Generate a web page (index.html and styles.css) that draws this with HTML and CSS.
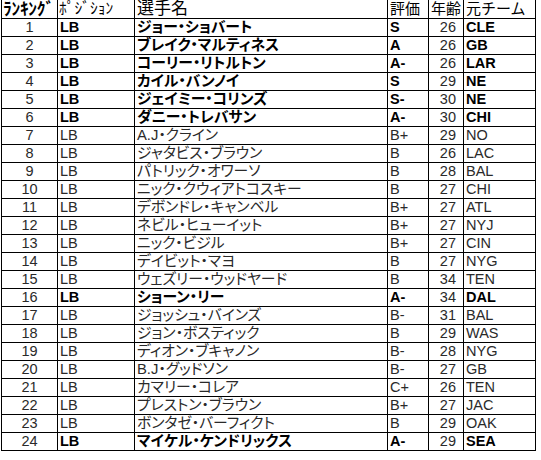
FILE: index.html
```html
<!DOCTYPE html>
<html lang="ja">
<head>
<meta charset="utf-8">
<link rel="stylesheet" href="styles.css">
</head>
<body>
<table class="sheet">
  <colgroup>
    <col class="c-rank"><col class="c-pos"><col class="c-name"><col class="c-grade"><col class="c-age"><col class="c-team">
  </colgroup>
  <thead>
    <tr class="head">
      <th class="rank-h">ﾗﾝｷﾝｸﾞ</th>
      <th class="pos-h">ﾎﾟｼﾞｼｮﾝ</th>
      <th class="name-h">選手名</th>
      <th>評価</th>
      <th>年齢</th>
      <th>元チーム</th>
    </tr>
  </thead>
  <tbody>
    <tr class="b"><td class="rank">1</td><td>LB</td><td class="name">ジョー・ショバート</td><td>S</td><td class="age">26</td><td>CLE</td></tr>
    <tr class="b"><td class="rank">2</td><td>LB</td><td class="name">ブレイク・マルティネス</td><td>A</td><td class="age">26</td><td>GB</td></tr>
    <tr class="b"><td class="rank">3</td><td>LB</td><td class="name">コーリー・リトルトン</td><td>A-</td><td class="age">26</td><td>LAR</td></tr>
    <tr class="b"><td class="rank">4</td><td>LB</td><td class="name">カイル・バンノイ</td><td>S</td><td class="age">29</td><td>NE</td></tr>
    <tr class="b"><td class="rank">5</td><td>LB</td><td class="name">ジェイミー・コリンズ</td><td>S-</td><td class="age">30</td><td>NE</td></tr>
    <tr class="b"><td class="rank">6</td><td>LB</td><td class="name">ダニー・トレバサン</td><td>A-</td><td class="age">30</td><td>CHI</td></tr>
    <tr><td class="rank">7</td><td>LB</td><td class="name">A.J・クライン</td><td>B+</td><td class="age">29</td><td>NO</td></tr>
    <tr><td class="rank">8</td><td>LB</td><td class="name">ジャタビス・ブラウン</td><td>B</td><td class="age">26</td><td>LAC</td></tr>
    <tr><td class="rank">9</td><td>LB</td><td class="name">パトリック・オワーソ</td><td>B</td><td class="age">28</td><td>BAL</td></tr>
    <tr><td class="rank">10</td><td>LB</td><td class="name">ニック・クウィアトコスキー</td><td>B</td><td class="age">27</td><td>CHI</td></tr>
    <tr><td class="rank">11</td><td>LB</td><td class="name">デボンドレ・キャンベル</td><td>B+</td><td class="age">27</td><td>ATL</td></tr>
    <tr><td class="rank">12</td><td>LB</td><td class="name">ネビル・ヒューイット</td><td>B+</td><td class="age">27</td><td>NYJ</td></tr>
    <tr><td class="rank">13</td><td>LB</td><td class="name">ニック・ビジル</td><td>B+</td><td class="age">27</td><td>CIN</td></tr>
    <tr><td class="rank">14</td><td>LB</td><td class="name">デイビット・マヨ</td><td>B</td><td class="age">27</td><td>NYG</td></tr>
    <tr><td class="rank">15</td><td>LB</td><td class="name">ウェズリー・ウッドヤード</td><td>B</td><td class="age">34</td><td>TEN</td></tr>
    <tr class="b"><td class="rank">16</td><td>LB</td><td class="name">ショーン・リー</td><td>A-</td><td class="age">34</td><td>DAL</td></tr>
    <tr><td class="rank">17</td><td>LB</td><td class="name">ジョッシュ・バインズ</td><td>B-</td><td class="age">31</td><td>BAL</td></tr>
    <tr><td class="rank">18</td><td>LB</td><td class="name">ジョン・ボスティック</td><td>B</td><td class="age">29</td><td>WAS</td></tr>
    <tr><td class="rank">19</td><td>LB</td><td class="name">ディオン・ブキャノン</td><td>B-</td><td class="age">28</td><td>NYG</td></tr>
    <tr><td class="rank">20</td><td>LB</td><td class="name">B.J・グッドソン</td><td>B-</td><td class="age">27</td><td>GB</td></tr>
    <tr><td class="rank">21</td><td>LB</td><td class="name">カマリー・コレア</td><td>C+</td><td class="age">26</td><td>TEN</td></tr>
    <tr><td class="rank">22</td><td>LB</td><td class="name">プレストン・ブラウン</td><td>B+</td><td class="age">27</td><td>JAC</td></tr>
    <tr><td class="rank">23</td><td>LB</td><td class="name">ボンタゼ・バーフィクト</td><td>B</td><td class="age">29</td><td>OAK</td></tr>
    <tr class="b"><td class="rank">24</td><td>LB</td><td class="name">マイケル・ケンドリックス</td><td>A-</td><td class="age">29</td><td>SEA</td></tr>
  </tbody>
</table>
</body>
</html>
```

FILE: styles.css
```css
html, body {
  margin: 0;
  padding: 0;
  background: #fff;
}

body {
  padding-left: 1px;
  font-family: "Liberation Sans", "Noto Sans CJK JP", sans-serif;
  font-size: 14.5px;
  color: #2a2a2a;
}

.sheet {
  border-collapse: separate;
  border-spacing: 0;
  table-layout: fixed;
  width: 535px;
  border-left: 1px solid #000;
}

.c-rank { width: 56px; }
.c-pos { width: 77px; }
.c-name { width: 253px; }
.c-grade { width: 41px; }
.c-age { width: 35px; }
.c-team { width: 72px; }

.sheet th,
.sheet td {
  padding: 0 0 0 2px;
  border-right: 1px solid #000;
  border-bottom: 1px solid #000;
  text-align: left;
  white-space: nowrap;
  overflow: hidden;
  vertical-align: top;
  font-weight: normal;
  box-sizing: border-box;
}

.sheet td {
  height: 18px;
  line-height: 17px;
}

.sheet td.name {
  font-feature-settings: "palt";
  font-size: 14.8px;
}

.sheet th {
  height: 19px;
  line-height: 18px;
  color: #000;
  font-size: 15px;
}

.sheet th.name-h {
  font-size: 17px;
}

.sheet th.rank-h {
  font-weight: bold;
  font-size: 17.5px;
  padding-left: 1px;
  letter-spacing: -0.3px;
}

.sheet th.pos-h {
  font-size: 15.5px;
  padding-left: 1px;
}

.sheet td.rank {
  text-align: center;
  padding: 0;
}

.sheet td.age {
  text-align: right;
  padding: 0 7px 0 0;
}

.sheet tr.b td {
  font-weight: bold;
  color: #000;
}

.sheet tr.b td.rank,
.sheet tr.b td.age {
  font-weight: normal;
  color: #2a2a2a;
}
```
